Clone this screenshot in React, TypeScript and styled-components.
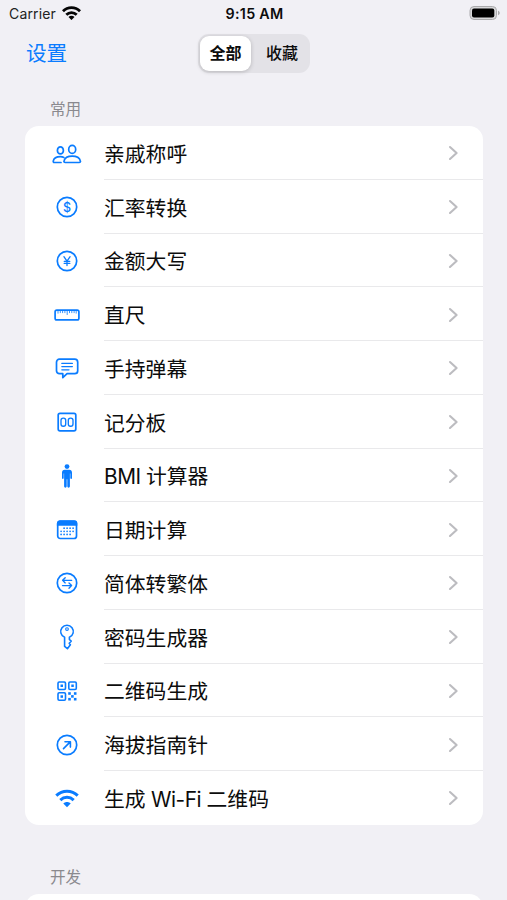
import React from "react";
import styled, { createGlobalStyle } from "styled-components";

const GlobalStyle = createGlobalStyle`
  * { box-sizing: border-box; }
  html, body { margin: 0; background: #f1f0f5; overflow: hidden; }
  body { font-family: Inter, "Noto Sans CJK SC", sans-serif; color: #0c0c0c; }
`;

const Screen = styled.main`
  display: flex;
  flex-direction: column;
  height: 900px;
  overflow: hidden;
  background: #f1f0f5;
  & > * { flex-shrink: 0; }
`;

const StatusBar = styled.header`
  display: grid;
  grid-template-columns: 1fr auto 1fr;
  align-items: center;
  height: 28px;
  padding: 0 7px 0 9px;
`;

const Carrier = styled.div`
  display: flex;
  align-items: center;
  gap: 6px;
  margin-top: -2px;
  font-size: 14px;
  letter-spacing: 0.15px;
  color: #222;
`;

const Clock = styled.div`
  margin-top: -2px;
  font-size: 14.3px;
  font-weight: 600;
  letter-spacing: 0.3px;
`;

const Battery = styled.svg`
  width: 31px;
  height: 16px;
  justify-self: end;
  margin-top: -2px;
`;

const NavBar = styled.nav`
  display: grid;
  grid-template-columns: 1fr 112px 1fr;
  align-items: center;
  height: 50px;
  padding: 0 25px 0 26px;
`;

const SettingsButton = styled.button`
  justify-self: start;
  border: 0;
  padding: 2px 0 0;
  background: none;
  color: #0a7cff;
  font: 400 20.6px/30px Inter, "Noto Sans CJK SC", sans-serif;
`;

const Segments = styled.div`
  display: grid;
  grid-template-columns: 51px 1fr;
  column-gap: 5px;
  height: 39px;
  padding: 2px;
  border-radius: 11px;
  background: #e3e2e7;
`;

const Segment = styled.button<{ $active?: boolean }>`
  border: 0;
  padding: 0;
  border-radius: 9px;
  color: #0c0c0c;
  background: ${(p) => (p.$active ? "#fff" : "transparent")};
  box-shadow: ${(p) => (p.$active ? "0 1px 4px rgba(0, 0, 0, 0.2)" : "none")};
  font: ${(p) => (p.$active ? 700 : 500)} 16px/24px Inter, "Noto Sans CJK SC", sans-serif;
`;

const SectionTitle = styled.h2`
  margin: 0;
  padding: 20px 0 4px 50px;
  height: 48px;
  font-size: 15.6px;
  line-height: 24px;
  font-weight: 400;
  color: #8a898e;
`;

const Card = styled.ul`
  list-style: none;
  margin: 0 24.5px 0 25px;
  padding: 0;
  border-radius: 14px;
  background: #fff;
  overflow: hidden;
`;

const Row = styled.li`
  display: grid;
  grid-template-columns: 79px 1fr;
  align-items: center;
  height: 53.75px;
`;

const RowIcon = styled.svg`
  width: 32px;
  height: 32px;
  margin: 1px 0 0 26px;
  fill: none;
  stroke: #0a7cff;
  stroke-width: 1.7;
  stroke-linecap: round;
  stroke-linejoin: round;
  color: #0a7cff;
`;

const RowBody = styled.div<{ $last: boolean }>`
  display: flex;
  align-items: center;
  justify-content: space-between;
  height: 100%;
  padding: 2px 24px 0 0;
  border-bottom: 1px solid ${(p) => (p.$last ? "transparent" : "#e9e9eb")};
`;

const Label = styled.span`
  padding-top: 3px;
  font-size: 20.8px;
  line-height: 30px;
  white-space: nowrap;
`;

const Latin = styled.span`
  letter-spacing: -0.45px;
`;

const Chevron = styled.svg`
  width: 11px;
  height: 16px;
  fill: none;
  stroke: #bcbcc0;
  stroke-width: 2.1;
  stroke-linecap: round;
  stroke-linejoin: round;
`;

const Spacer = styled.div`
  height: 21px;
`;

const SymbolText = styled.text<{ $size: number }>`
  font: 500 ${(p) => p.$size}px Inter, sans-serif;
  fill: #0a7cff;
  stroke: none;
  text-anchor: middle;
`;

const Wifi = ({ size, color }: { size: number; color: string }) => (
  <svg width={size} height={size * 0.74} viewBox="0 0 24 17.8" fill="none" stroke={color} strokeWidth="3.6">
    <path d="M1.2 6.6C7.3.5 16.7.5 22.8 6.6" />
    <path d="M5.4 11.2c3.8-3.7 9.4-3.7 13.2 0" />
    <path d="M12 17.8 8.2 14c2-2 5.6-2 7.6 0Z" fill={color} stroke="none" />
  </svg>
);

const Ring = () => <circle cx="16" cy="16" r="9.7" />;

const calendarDots = [
  [14, 13.9], [17, 13.9], [20, 13.9], [23, 13.9],
  [11, 17], [14, 17], [17, 17], [20, 17], [23, 17],
  [11, 20.1], [14, 20.1], [17, 20.1], [20, 20.1],
];

const icons: Record<string, React.ReactNode> = {
  people: (
    <>
      <ellipse cx="9.4" cy="13.4" rx="3" ry="3.5" />
      <ellipse cx="21.2" cy="12.4" rx="3.5" ry="4" />
      <path d="M10 25.5H3.4c-1 0-1.3-.7-1.1-1.6.5-2.5 3.5-4.3 7.1-4.3 1.3 0 2.5.3 3.5.8" />
      <path d="M14.3 25.5h13.8c1.1 0 1.6-.6 1.3-1.6-.8-2.9-4.1-4.7-8.2-4.7s-7.4 1.8-8.2 4.7c-.3 1 .2 1.6 1.3 1.6Z" />
    </>
  ),
  dollar: (
    <>
      <Ring />
      <SymbolText x="16" y="20.5" $size={12.5}>$</SymbolText>
    </>
  ),
  yen: (
    <>
      <Ring />
      <path strokeWidth="1.3" d="m12.9 11.7 3.1 4.5 3.1-4.5M16 16.2v4.4M13.2 16.3h5.6M13.2 18.4h5.6" />
    </>
  ),
  ruler: (
    <>
      <rect x="4.1" y="11.1" width="23.8" height="9.8" rx="1.7" />
      <path strokeWidth="0.8" d="M7 12v2.2M9.3 12v1.7M11.6 12v1.7M13.9 12v1.7M16.2 12v3.6M18.5 12v1.7M20.8 12v1.7M23.1 12v1.7M25.2 12v2.2" />
    </>
  ),
  message: (
    <>
      <path d="M8.5 7.2h15.2c1.9 0 3 1.2 3 3v8.5c0 1.8-1.1 3-3 3h-7.6l-4.3 4v-4H8.5c-1.8 0-3-1.2-3-3v-8.5c0-1.8 1.2-3 3-3Z" />
      <path strokeWidth="1.2" d="M10.8 11.4h10.6M10.8 14.6h10.6M10.8 17.8H18" />
    </>
  ),
  score: (
    <>
      <rect x="7.2" y="7.3" width="17.6" height="17.6" rx="1.8" />
      <rect x="10" y="12.1" width="4.7" height="8.1" rx="2.2" strokeWidth="1.35" />
      <rect x="17.3" y="12.1" width="4.7" height="8.1" rx="2.2" strokeWidth="1.35" />
    </>
  ),
  person: (
    <g fill="currentColor" stroke="none">
      <circle cx="16" cy="6.6" r="2.4" />
      <path d="M13.8 9.7h4.4c1.8 0 2.8 1.1 2.8 3v5.4c0 1.3-1.7 1.3-1.7 0v-4.6h-.4v12.8c0 1.8-2.6 1.8-2.6 0v-7h-.6v7c0 1.8-2.6 1.8-2.6 0V13.5h-.4v4.6c0 1.3-1.7 1.3-1.7 0v-5.4c0-1.9 1-3 2.8-3Z" />
    </g>
  ),
  calendar: (
    <>
      <rect x="6.7" y="7.2" width="18.8" height="17.3" rx="2.5" />
      <path fill="currentColor" stroke="none" d="M5.9 11.7V9.4c0-2 1.1-3 3-3h14.4c2 0 3 1 3 3v2.3Z" />
      {calendarDots.map(([x, y]) => (
        <circle key={`${x}-${y}`} cx={x - 0.9} cy={y + 0.3} r="0.85" fill="currentColor" stroke="none" />
      ))}
    </>
  ),
  swap: (
    <>
      <Ring />
      <path strokeWidth="1.35" d="M20.7 13.3h-9M14.2 10.7l-2.6 2.6 2.6 2.6M11.5 18.6h9M18 16l2.6 2.6-2.6 2.6" />
    </>
  ),
  key: (
    <>
      <path strokeWidth="1.6" d="M13.6 16.3a6.3 6.3 0 1 1 4.8 0v2.2l1.8 1.7-2 2 1.2 1.6-3 3.9-2.8-2.3Z" />
      <circle cx="16" cy="8.1" r="1.35" strokeWidth="1.1" />
    </>
  ),
  qr: (
    <>
      {[[7, 7], [17.8, 7], [7, 17.8]].map(([x, y]) => (
        <React.Fragment key={`${x}-${y}`}>
          <rect x={x} y={y} width="7.5" height="7.5" rx="1.2" strokeWidth="1.6" />
          <rect x={x + 2.5} y={y + 2.5} width="2.5" height="2.5" fill="currentColor" stroke="none" />
        </React.Fragment>
      ))}
      {[[17.2, 17.2], [22.9, 17.2], [20.1, 20.1], [17.2, 22.9], [22.9, 22.9]].map(([x, y]) => (
        <rect key={`${x}-${y}`} x={x} y={y} width="2.6" height="2.6" fill="currentColor" stroke="none" />
      ))}
    </>
  ),
  compass: (
    <>
      <Ring />
      <path strokeWidth="1.6" d="m12.5 19.6 6.7-6.7M14 12.7h5.4v5.4" />
    </>
  ),
  wifi: (
    <g strokeWidth="3" strokeLinecap="butt">
      <path d="M5.3 13.6c6-5.9 15.4-5.9 21.4 0" />
      <path d="M9.3 18.1c3.9-3.7 9.5-3.7 13.4 0" />
      <path d="M16 25.2 12.3 21.4c2.1-2 5.3-2 7.4 0Z" fill="currentColor" stroke="none" />
    </g>
  ),
};

const tools: [string, React.ReactNode][] = [
  ["people", "亲戚称呼"],
  ["dollar", "汇率转换"],
  ["yen", "金额大写"],
  ["ruler", "直尺"],
  ["message", "手持弹幕"],
  ["score", "记分板"],
  ["person", <><Latin>BMI </Latin>计算器</>],
  ["calendar", "日期计算"],
  ["swap", "简体转繁体"],
  ["key", "密码生成器"],
  ["qr", "二维码生成"],
  ["compass", "海拔指南针"],
  ["wifi", <>生成<Latin> Wi-Fi </Latin>二维码</>],
];

export default function App() {
  return (
    <>
      <GlobalStyle />
      <Screen>
        <StatusBar>
          <Carrier>
            Carrier
            <Wifi size={19} color="#050505" />
          </Carrier>
          <Clock>9:15 AM</Clock>
          <Battery viewBox="0 0 31 16">
            <rect x="1" y="1.5" width="26.5" height="13" rx="4" fill="#d8d8da" stroke="#aaaaac" />
            <rect x="3" y="3.5" width="22.3" height="9" rx="2" fill="#000" />
            <path d="M29 5.8c2.3.7 2.3 3.7 0 4.4Z" fill="#aaaaac" />
          </Battery>
        </StatusBar>
        <NavBar>
          <SettingsButton>设置</SettingsButton>
          <Segments>
            <Segment $active>全部</Segment>
            <Segment>收藏</Segment>
          </Segments>
        </NavBar>
        <SectionTitle>常用</SectionTitle>
        <Card>
          {tools.map(([icon, label], i) => (
            <Row key={icon}>
              <RowIcon viewBox="0 0 32 32">{icons[icon]}</RowIcon>
              <RowBody $last={i === tools.length - 1}>
                <Label>{label}</Label>
                <Chevron viewBox="0 0 11 16">
                  <path d="m2 2 6.6 6L2 14" />
                </Chevron>
              </RowBody>
            </Row>
          ))}
        </Card>
        <Spacer />
        <SectionTitle>开发</SectionTitle>
        <Card>
          <Row />
        </Card>
      </Screen>
    </>
  );
}
